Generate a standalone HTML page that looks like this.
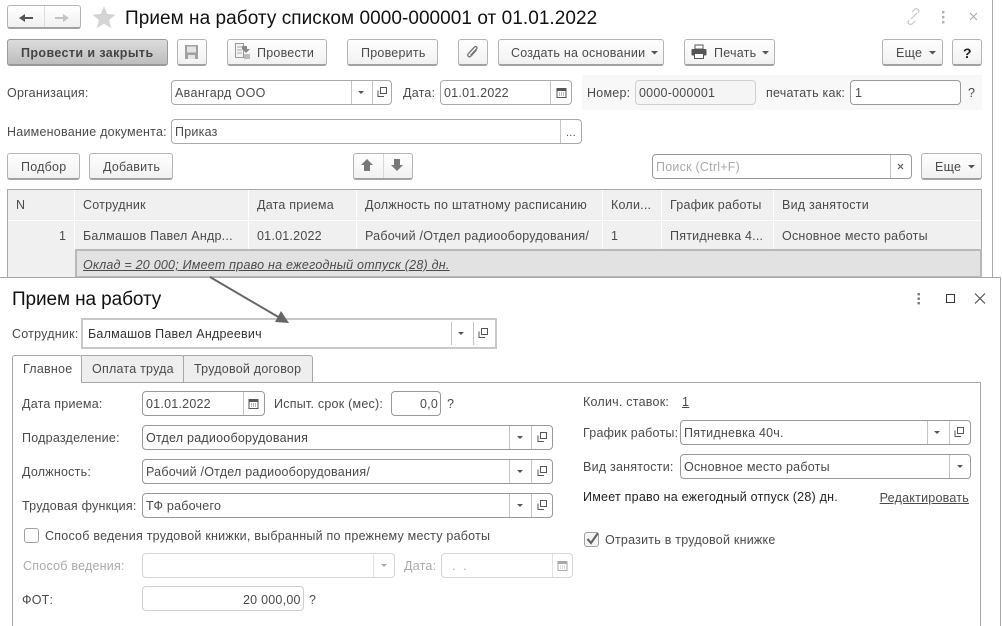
<!DOCTYPE html>
<html lang="ru"><head><meta charset="utf-8"><title>Прием на работу</title>
<style>
html,body{margin:0;padding:0;background:#fff}
#p{position:relative;width:1002px;height:626px;overflow:hidden;background:#fff;font-family:"Liberation Sans",Arial,sans-serif;font-size:12.5px;color:#4a4a4a;letter-spacing:.23px}
#p div,#p span.t{position:absolute;box-sizing:border-box}
.t{white-space:nowrap;line-height:16px}
.b{border:1px solid #b4b4b4;border-bottom:2px solid #a2a2a2;border-radius:3px;background:linear-gradient(#fff,#f1f1f1);height:27px}
.f{border:1px solid #a9a9a9;border-radius:4px;background:#fff;height:25px}
.d{background:#c4c4c4;width:1px}
.k{color:#222}
.g{color:#aaa}
svg{position:absolute;overflow:visible}
</style></head><body><div id="p">

<!-- main window right edge -->
<div style="left:992px;top:0;width:1px;height:278px;background:#aaa"></div>

<!-- nav -->
<div class="b" style="left:7px;top:5px;width:74px;height:24px"></div>
<div class="d" style="left:44px;top:6px;height:21px;background:#ddd"></div>
<svg style="left:0;top:0" width="130" height="35"><path d="M21 18h12" stroke="#555" stroke-width="2"/><path d="M19 18l6-4v8z" fill="#555"/><path d="M55 18h12" stroke="#c4c4c4" stroke-width="2"/><path d="M69 18l-6-4v8z" fill="#c4c4c4"/><path d="M104 6l3.2 8 8.300.6-6.400 5.300 2.100 8.300-7.200-4.600-7.200 4.600 2.100-8.300-6.400-5.300 8.300-.6z" fill="#d4d4d4"/></svg>
<span class="t" style="left:125px;top:8px;font-size:19px;line-height:22px;color:#111;letter-spacing:.05px">Прием на работу списком 0000-000001 от 01.01.2022</span>
<svg style="left:905px;top:8px" width="90" height="18"><path d="M3 12l-1 2c0 2 2 3 4 2l3-3M12 5l1-2c0-1-2-3-4-2L6 4M5 11l6-6" fill="none" stroke="#c8c8c8" stroke-width="1.200" transform="translate(1 0)"/><g fill="#b0b0b0"><rect x="37" y="3" width="2.400" height="2.400"/><rect x="37" y="8" width="2.400" height="2.400"/><rect x="37" y="13" width="2.400" height="2.400"/></g><path d="M65 5l7 7M72 5l-7 7" stroke="#aaa" stroke-width="1"/></svg>

<!-- command bar -->
<div class="b" style="left:7px;top:39px;width:161px;background:linear-gradient(#dcdcdc,#bdbdbd);border-color:#999"></div>
<span class="t" style="left:21px;top:45px;font-weight:bold;color:#444;letter-spacing:.4px">Провести и закрыть</span>
<div class="b" style="left:177px;top:39px;width:30px"></div>
<svg style="left:184px;top:44px" width="16" height="16"><path d="M1 1h13v14H1z" fill="#a0a0a0"/><rect x="3" y="2.500" width="9" height="6" fill="#e4e4e4"/><rect x="4" y="11" width="7" height="4" fill="#e4e4e4"/></svg>
<div class="b" style="left:227px;top:39px;width:100px"></div>
<svg style="left:234px;top:43px" width="18" height="18"><path d="M1.500 .5h8v14h-8z" fill="#f4f4f4" stroke="#999"/><path d="M3 4h5M3 7h5M3 10h5" stroke="#aaa"/><path d="M8 3h5v3h3l-4 4-4-4z" fill="#888"/><rect x="10" y="11" width="6" height="5" fill="#bbb"/></svg>
<span class="t" style="left:257px;top:45px">Провести</span>
<div class="b" style="left:347px;top:39px;width:91px"></div>
<span class="t" style="left:361px;top:45px">Проверить</span>
<div class="b" style="left:458px;top:39px;width:30px"></div>
<svg style="left:465px;top:44px" width="16" height="16"><path d="M12.500 6L7 12c-2 2-4.500-.5-2.500-2.500L10.500 3c1.500-1.500 3.500.5 2 2L6.500 11.500" transform="translate(-1 0)" fill="none" stroke="#777" stroke-width="1.300"/></svg>
<div class="b" style="left:498px;top:39px;width:166px"></div>
<span class="t" style="left:511px;top:45px">Создать на основании</span>
<svg style="left:651px;top:51px" width="8" height="5"><path d="M0 0h7L3.500 3.500z" fill="#555"/></svg>
<div class="b" style="left:684px;top:39px;width:91px"></div>
<svg style="left:691px;top:44px" width="16" height="16"><rect x="4" y="1" width="8" height="4" fill="#fff" stroke="#555"/><rect x="0.500" y="5" width="15" height="6.500" rx="1" fill="#555"/><rect x="3.500" y="9.500" width="9" height="5" fill="#fff" stroke="#555"/></svg>
<span class="t" style="left:714px;top:45px">Печать</span>
<svg style="left:762px;top:51px" width="8" height="5"><path d="M0 0h7L3.500 3.500z" fill="#555"/></svg>
<div class="b" style="left:882px;top:39px;width:61px"></div>
<span class="t" style="left:896px;top:45px">Еще</span>
<svg style="left:929px;top:51px" width="8" height="5"><path d="M0 0h7L3.500 3.500z" fill="#555"/></svg>
<div class="b" style="left:952px;top:39px;width:30px"></div>
<span class="t k" style="left:963px;top:45px;font-weight:bold;font-size:14px">?</span>

<!-- org row -->
<span class="t" style="left:7px;top:85px">Организация:</span>
<div class="f" style="left:171px;top:80px;width:221px"></div>
<div class="d" style="left:351px;top:81px;height:23px"></div><div class="d" style="left:372px;top:81px;height:23px"></div>
<span class="t" style="left:175px;top:85px;letter-spacing:.35px">Авангард ООО</span>
<svg style="left:358px;top:91px" width="7" height="4"><path d="M0 0h6L3 3z" fill="#555"/></svg>
<svg style="left:377px;top:87px" width="11" height="11"><path d="M3.500 .5h6v6h-6zM1 3.500v6h6" fill="none" stroke="#555"/></svg>
<span class="t" style="left:403px;top:85px">Дата:</span>
<div class="f" style="left:440px;top:80px;width:132px"></div>
<div class="d" style="left:550px;top:81px;height:23px"></div>
<span class="t" style="left:444px;top:85px">01.01.2022</span>
<svg style="left:556px;top:87px" width="11" height="11"><path d="M1 1.500h9v9H1z" fill="#fff" stroke="#555"/><path d="M1 2h9v2H1z" fill="#555"/><path d="M3 6h5M3 8h5" stroke="#777" stroke-dasharray="1 1"/></svg>
<div style="left:582px;top:75px;width:400px;height:35px;background:#f8f8f8"></div>
<span class="t" style="left:587px;top:85px">Номер:</span>
<div class="f" style="left:635px;top:80px;width:121px;background:#f5f5f5;border-color:#cfcfcf"></div>
<span class="t" style="left:639px;top:85px">0000-000001</span>
<span class="t" style="left:766px;top:85px">печатать как:</span>
<div class="f" style="left:850px;top:80px;width:111px;border-color:#999"></div>
<span class="t" style="left:855px;top:85px">1</span>
<span class="t" style="left:968px;top:85px">?</span>

<!-- name row -->
<span class="t" style="left:7px;top:124px">Наименование документа:</span>
<div class="f" style="left:171px;top:119px;width:411px"></div>
<div class="d" style="left:560px;top:120px;height:23px"></div>
<span class="t" style="left:175px;top:124px">Приказ</span>
<span class="t" style="left:566px;top:125px;font-size:11px">...</span>

<!-- table toolbar -->
<div class="b" style="left:7px;top:153px;width:73px"></div>
<span class="t" style="left:21px;top:159px">Подбор</span>
<div class="b" style="left:89px;top:153px;width:84px"></div>
<span class="t" style="left:103px;top:159px">Добавить</span>
<div class="b" style="left:353px;top:153px;width:60px"></div>
<div class="d" style="left:383px;top:154px;height:24px;background:#d8d8d8"></div>
<svg style="left:360px;top:158px" width="50" height="16"><path d="M7 1l6 6h-3v6H4V7H1z" fill="#777"/><path d="M34 1h6v6h3l-6 6-6-6h3z" fill="#777"/></svg>
<div class="f" style="left:652px;top:154px;width:260px;border-color:#999"></div>
<div class="d" style="left:890px;top:155px;height:23px"></div>
<span class="t g" style="left:656px;top:159px">Поиск (Ctrl+F)</span>
<svg style="left:897px;top:163px" width="8" height="8"><path d="M1 1l5 5M6 1L1 6" stroke="#555" stroke-width="1.100"/></svg>
<div class="b" style="left:921px;top:153px;width:61px"></div>
<span class="t" style="left:935px;top:159px">Еще</span>
<svg style="left:968px;top:165px" width="8" height="5"><path d="M0 0h7L3.500 3.500z" fill="#555"/></svg>

<!-- table -->
<div style="left:7px;top:189px;width:975px;height:90px;border:1px solid #a8a8a8;background:#f0f0f0"></div>
<div style="left:8px;top:220px;width:973px;height:1px;background:#fff"></div>
<div style="left:74px;top:190px;width:1px;height:60px;background:#fff"></div>
<div style="left:248px;top:190px;width:1px;height:60px;background:#fff"></div>
<div style="left:356px;top:190px;width:1px;height:60px;background:#fff"></div>
<div style="left:602px;top:190px;width:1px;height:60px;background:#fff"></div>
<div style="left:661px;top:190px;width:1px;height:60px;background:#fff"></div>
<div style="left:773px;top:190px;width:1px;height:60px;background:#fff"></div>
<span class="t" style="left:16px;top:197px">N</span>
<span class="t" style="left:83px;top:197px">Сотрудник</span>
<span class="t" style="left:257px;top:197px">Дата приема</span>
<span class="t" style="left:365px;top:197px">Должность по штатному расписанию</span>
<span class="t" style="left:611px;top:197px">Коли...</span>
<span class="t" style="left:670px;top:197px">График работы</span>
<span class="t" style="left:782px;top:197px">Вид занятости</span>
<span class="t" style="left:59px;top:228px">1</span>
<span class="t" style="left:83px;top:228px">Балмашов Павел Андр...</span>
<span class="t" style="left:257px;top:228px">01.01.2022</span>
<span class="t" style="left:365px;top:228px">Рабочий /Отдел радиооборудования/</span>
<span class="t" style="left:611px;top:228px">1</span>
<span class="t" style="left:670px;top:228px">Пятидневка 4...</span>
<span class="t" style="left:782px;top:228px">Основное место работы</span>
<div style="left:75px;top:249px;width:907px;height:29px;background:#e2e2e2;border:2px solid #b8b8b8"></div>
<span class="t" style="left:83px;top:257px;font-style:italic;text-decoration:underline">Оклад = 20 000; Имеет право на ежегодный отпуск (28) дн.</span>

<!-- dialog -->
<div style="left:-2px;top:277px;width:1003px;height:352px;background:#fff;border:1px solid #a8a8a8"></div>
<span class="t" style="left:12px;top:289px;font-size:19px;line-height:22px;color:#111;letter-spacing:-.1px">Прием на работу</span>
<svg style="left:910px;top:291px" width="82" height="15"><g fill="#777"><rect x="7.500" y="2" width="2.400" height="2.400"/><rect x="7.500" y="6.500" width="2.400" height="2.400"/><rect x="7.500" y="11" width="2.400" height="2.400"/></g><rect x="36.500" y="3.500" width="8" height="8" fill="none" stroke="#333"/><path d="M65 2.500l10 10M75 2.500l-10 10" stroke="#444"/></svg>

<span class="t" style="left:12px;top:326px">Сотрудник:</span>
<div style="left:81px;top:318px;width:416px;height:31px;border:2px solid #c8c8c8;background:#fff"></div>
<div class="d" style="left:451px;top:322px;height:23px"></div><div class="d" style="left:473px;top:322px;height:23px"></div>
<span class="t k" style="left:88px;top:326px;color:#333">Балмашов Павел Андреевич</span>
<svg style="left:458px;top:332px" width="7" height="4"><path d="M0 0h6L3 3z" fill="#555"/></svg>
<svg style="left:478px;top:328px" width="11" height="11"><path d="M3.500 .5h6v6h-6zM1 3.500v6h6" fill="none" stroke="#555"/></svg>
<svg style="left:0;top:270px" width="300" height="60"><path d="M210 7L280 48" stroke="#666" stroke-width="2"/><path d="M289 53l-14-1 6-11z" fill="#666"/></svg>

<!-- tabs -->
<div style="left:12px;top:382px;width:969px;height:250px;border:1px solid #a8a8a8;background:#fff"></div>
<div style="left:81px;top:355px;width:103px;height:28px;background:#eee;border:1px solid #a8a8a8;border-left:0;border-radius:0 3px 0 0"></div>
<div style="left:183px;top:355px;width:130px;height:28px;background:#eee;border:1px solid #a8a8a8;border-radius:0 3px 0 0"></div>
<div style="left:12px;top:355px;width:70px;height:28px;background:#fff;border:1px solid #a8a8a8;border-bottom:0;border-radius:3px 3px 0 0"></div>
<span class="t" style="left:23px;top:361px">Главное</span>
<span class="t" style="left:92px;top:361px">Оплата труда</span>
<span class="t" style="left:194px;top:361px">Трудовой договор</span>

<!-- left form -->
<span class="t" style="left:22px;top:396px">Дата приема:</span>
<div class="f" style="left:142px;top:391px;width:123px;background:#fff;border-color:#999"></div>
<div class="d" style="left:243px;top:392px;height:23px"></div>
<span class="t" style="left:146px;top:396px">01.01.2022</span>
<svg style="left:248px;top:398px" width="11" height="11"><path d="M1 1.500h9v9H1z" fill="#fff" stroke="#555"/><path d="M1 2h9v2H1z" fill="#555"/><path d="M3 6h5M3 8h5" stroke="#777" stroke-dasharray="1 1"/></svg>
<span class="t" style="left:274px;top:396px">Испыт. срок (мес):</span>
<div class="f" style="left:391px;top:391px;width:50px;border-color:#999"></div>
<span class="t" style="left:420px;top:396px">0,0</span>
<span class="t" style="left:447px;top:396px">?</span>

<span class="t" style="left:22px;top:430px">Подразделение:</span>
<div class="f" style="left:142px;top:425px;width:411px;border-color:#999"></div>
<div class="d" style="left:509px;top:426px;height:23px"></div><div class="d" style="left:531px;top:426px;height:23px"></div>
<span class="t k" style="left:146px;top:430px;color:#444">Отдел радиооборудования</span>
<svg style="left:517px;top:436px" width="7" height="4"><path d="M0 0h6L3 3z" fill="#555"/></svg>
<svg style="left:537px;top:432px" width="11" height="11"><path d="M3.500 .5h6v6h-6zM1 3.500v6h6" fill="none" stroke="#555"/></svg>

<span class="t" style="left:22px;top:464px">Должность:</span>
<div class="f" style="left:142px;top:459px;width:411px;border-color:#999"></div>
<div class="d" style="left:509px;top:460px;height:23px"></div><div class="d" style="left:531px;top:460px;height:23px"></div>
<span class="t" style="left:146px;top:464px">Рабочий /Отдел радиооборудования/</span>
<svg style="left:517px;top:470px" width="7" height="4"><path d="M0 0h6L3 3z" fill="#555"/></svg>
<svg style="left:537px;top:466px" width="11" height="11"><path d="M3.500 .5h6v6h-6zM1 3.500v6h6" fill="none" stroke="#555"/></svg>

<span class="t" style="left:22px;top:498px">Трудовая функция:</span>
<div class="f" style="left:142px;top:493px;width:411px;border-color:#999"></div>
<div class="d" style="left:509px;top:494px;height:23px"></div><div class="d" style="left:531px;top:494px;height:23px"></div>
<span class="t" style="left:146px;top:498px">ТФ рабочего</span>
<svg style="left:517px;top:504px" width="7" height="4"><path d="M0 0h6L3 3z" fill="#555"/></svg>
<svg style="left:537px;top:500px" width="11" height="11"><path d="M3.500 .5h6v6h-6zM1 3.500v6h6" fill="none" stroke="#555"/></svg>

<div style="left:24px;top:528px;width:15px;height:15px;border:1px solid #a0a0a0;border-radius:3px;background:#fff"></div>
<span class="t" style="left:45px;top:528px">Способ ведения трудовой книжки, выбранный по прежнему месту работы</span>

<span class="t g" style="left:23px;top:558px">Способ ведения:</span>
<div class="f" style="left:142px;top:553px;width:253px;border-color:#d6d6d6"></div>
<div class="d" style="left:373px;top:554px;height:23px;background:#e0e0e0"></div>
<svg style="left:381px;top:564px" width="7" height="4"><path d="M0 0h6L3 3z" fill="#aaa"/></svg>
<span class="t g" style="left:404px;top:558px">Дата:</span>
<div class="f" style="left:441px;top:553px;width:132px;border-color:#d6d6d6"></div>
<div class="d" style="left:552px;top:554px;height:23px;background:#e0e0e0"></div>
<span class="t g" style="left:452px;top:558px">.&nbsp;&nbsp;.</span>
<svg style="left:557px;top:560px" width="11" height="11"><path d="M1 1.500h9v9H1z" fill="#fff" stroke="#aaa"/><path d="M1 2h9v2H1z" fill="#aaa"/><path d="M3 6h5M3 8h5" stroke="#bbb" stroke-dasharray="1 1"/></svg>

<span class="t" style="left:22px;top:592px">ФОТ:</span>
<div class="f" style="left:142px;top:586px;width:162px;border-color:#cfcfcf"></div>
<span class="t" style="left:243px;top:592px">20 000,00</span>
<span class="t" style="left:309px;top:592px">?</span>

<!-- right form -->
<span class="t" style="left:583px;top:394px">Колич. ставок:</span>
<span class="t" style="left:682px;top:394px;text-decoration:underline">1</span>
<span class="t" style="left:583px;top:425px">График работы:</span>
<div class="f" style="left:680px;top:420px;width:291px;border-color:#999"></div>
<div class="d" style="left:927px;top:421px;height:23px"></div><div class="d" style="left:949px;top:421px;height:23px"></div>
<span class="t" style="left:684px;top:425px">Пятидневка 40ч.</span>
<svg style="left:934px;top:431px" width="7" height="4"><path d="M0 0h6L3 3z" fill="#555"/></svg>
<svg style="left:954px;top:427px" width="11" height="11"><path d="M3.500 .5h6v6h-6zM1 3.500v6h6" fill="none" stroke="#555"/></svg>
<span class="t" style="left:583px;top:459px">Вид занятости:</span>
<div class="f" style="left:680px;top:454px;width:291px;border-color:#999"></div>
<div class="d" style="left:949px;top:455px;height:23px"></div>
<span class="t" style="left:684px;top:459px">Основное место работы</span>
<svg style="left:957px;top:465px" width="7" height="4"><path d="M0 0h6L3 3z" fill="#555"/></svg>
<span class="t k" style="left:583px;top:489px;color:#222">Имеет право на ежегодный отпуск (28) дн.</span>
<span class="t" style="right:33px;top:490px;text-decoration:underline">Редактировать</span>
<div style="left:584px;top:532px;width:15px;height:15px;border:1px solid #a0a0a0;border-radius:3px;background:#f4f4f4"></div>
<svg style="left:584px;top:530px" width="18" height="17"><path d="M3.500 9l3.500 4 7-10" fill="none" stroke="#666" stroke-width="2.200"/></svg>
<span class="t" style="left:605px;top:532px">Отразить в трудовой книжке</span>

</div></body></html>
